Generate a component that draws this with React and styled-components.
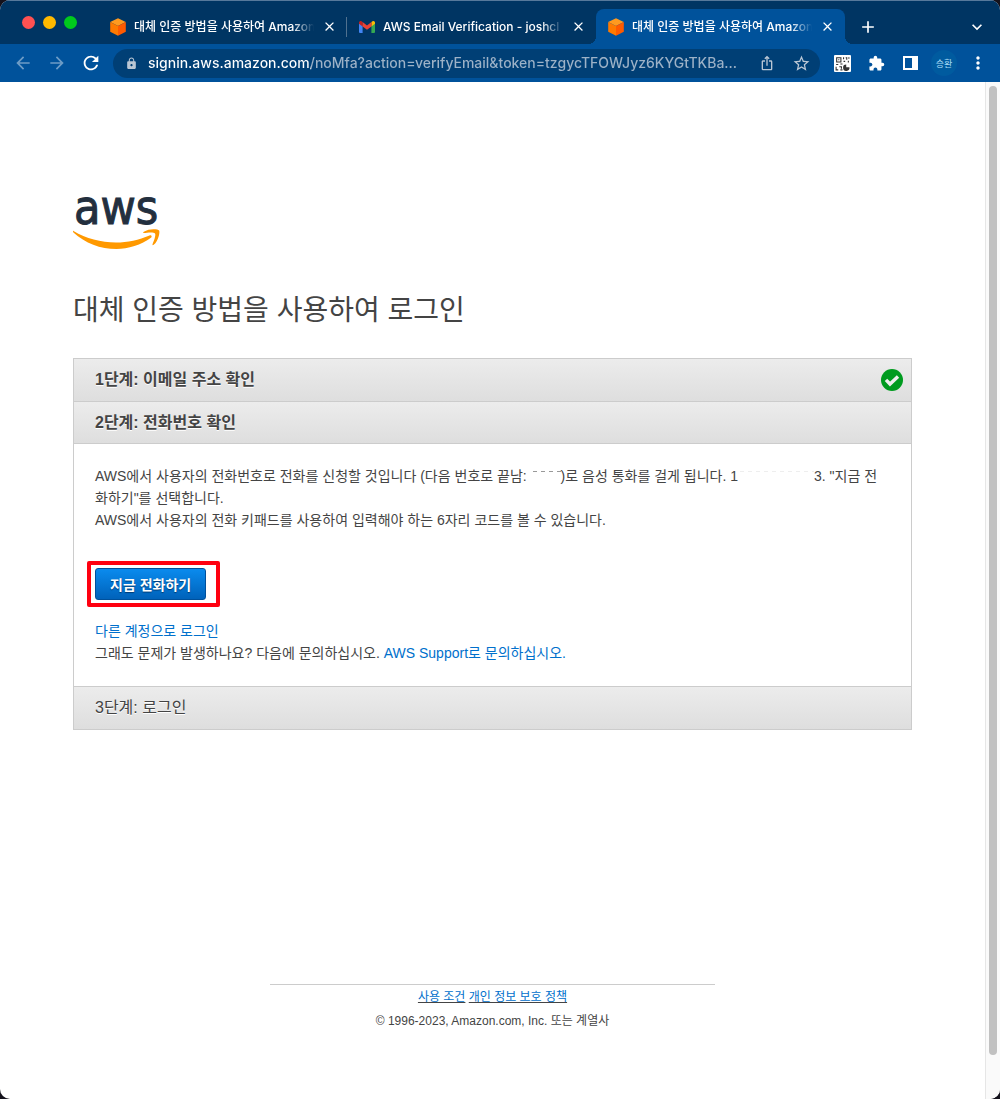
import React, { useState } from 'react';
import styled, { createGlobalStyle } from 'styled-components';
import {
  MdArrowBack,
  MdArrowForward,
  MdRefresh,
  MdLock,
  MdIosShare,
  MdStarOutline,
  MdExtension,
  MdMoreVert,
  MdClose,
  MdAdd,
  MdKeyboardArrowDown,
} from 'react-icons/md';

const GlobalStyle = createGlobalStyle`
  * {
    box-sizing: border-box;
  }

  body {
    margin: 0;
    background-color: #14121c;
    color: #444;
    font-family: 'Liberation Sans', 'Noto Sans CJK KR', sans-serif;
    font-size: 14px;
    line-height: 22px;
  }

  button,
  input {
    font-family: inherit;
  }
`;

const Window = styled.div`
  display: flex;
  flex-direction: column;
  min-height: 100vh;
  border-radius: 10px;
  overflow: hidden;
  background-color: #fff;
`;

const Chrome = styled.header`
  font-family: Inter, 'Noto Sans CJK KR', sans-serif;
  color: #fff;
`;

const TabStrip = styled.div`
  display: flex;
  align-items: flex-end;
  height: 44px;
  background-color: #003563;
  border-top: 1px solid #57799b;
`;

const TrafficLights = styled.div`
  display: flex;
  align-self: center;
  gap: 8px;
  width: 98px;
  padding-left: 22px;
`;

const Light = styled.button`
  width: 13px;
  height: 13px;
  padding: 0;
  border: none;
  border-radius: 50%;
  background-color: ${(props) => props.$color};
`;

const Tab = styled.div`
  position: relative;
  display: flex;
  align-items: center;
  gap: 8px;
  flex: 0 1 249px;
  min-width: 0;
  height: 35px;
  padding: 0 10px 0 12px;
  border-radius: 8px 8px 0 0;
  background-color: ${(props) => (props.$active ? '#00529b' : 'transparent')};

  &::before,
  &::after {
    content: '';
    display: ${(props) => (props.$active ? 'block' : 'none')};
    position: absolute;
    bottom: 0;
    width: 8px;
    height: 8px;
  }

  &::before {
    right: 100%;
    background: radial-gradient(circle at 0 0, transparent 8px, #00529b 8px);
  }

  &::after {
    left: 100%;
    background: radial-gradient(circle at 100% 0, transparent 8px, #00529b 8px);
  }
`;

const TabTitle = styled.span`
  flex: 1;
  min-width: 0;
  overflow: hidden;
  white-space: nowrap;
  font-size: 12px;
  font-weight: 500;
  mask-image: linear-gradient(to right, #000 88%, transparent);
`;

const TabDivider = styled.div`
  align-self: center;
  width: 1px;
  height: 20px;
  margin: 8px 0 0 -1px;
  background-color: #50718f;
`;

const IconButton = styled.button`
  display: flex;
  align-items: center;
  justify-content: center;
  flex: none;
  width: ${(props) => props.$width || 34}px;
  height: ${(props) => props.$height || 34}px;
  padding: 0;
  border: none;
  background: none;
  color: ${(props) => props.$color || '#fff'};
`;

const TabMenu = styled.div`
  margin-left: auto;
  padding-right: 6px;
`;

const Toolbar = styled.div`
  display: flex;
  align-items: center;
  height: 38px;
  padding: 0 5px 0 6px;
  background-color: #00529b;
`;

const AddressBar = styled.div`
  display: flex;
  align-items: center;
  flex: 1;
  min-width: 0;
  height: 29px;
  margin: 0 5px;
  padding: 0 2px 0 12px;
  border-radius: 15px;
  background-color: #003f75;
  color: #b9c6d4;
`;

const AddressInput = styled.input`
  flex: 1;
  min-width: 0;
  margin-left: 10px;
  padding: 0;
  border: none;
  outline: none;
  font-size: 14px;
  font-weight: 500;
  line-height: 22px;
  text-overflow: ellipsis;
  color: transparent;
  background-image: linear-gradient(to right, #fff 163px, #9db2c7 163px);
  background-clip: text;
`;

const Profile = styled.button`
  width: 26px;
  height: 26px;
  margin: 0 4px;
  padding: 0;
  border: none;
  border-radius: 50%;
  background-color: #005b9f;
  color: #a8dcf5;
  font-size: 9px;
`;

const Viewport = styled.div`
  display: flex;
  flex: 1;
`;

const Page = styled.main`
  display: flex;
  flex-direction: column;
  flex: 1;
  min-width: 0;
  padding: 112px 73px 66px;
`;

const ScrollTrack = styled.div`
  width: 15px;
  padding: 4px 3px;
  border-left: 1px solid #e6e6e6;
  background-color: #fafafa;
`;

const ScrollThumb = styled.div`
  width: 8px;
  height: 96%;
  border-radius: 4px;
  background-color: #c1c1c1;
`;

const Title = styled.h1`
  margin: 40px 0 26px;
  font-size: 28px;
  font-weight: 400;
  line-height: 42px;
`;

const Steps = styled.section`
  border: 1px solid #ccc;
`;

const StepHeader = styled.h2`
  display: flex;
  align-items: center;
  justify-content: space-between;
  height: 42px;
  margin: 0;
  padding: 0 8px 0 21px;
  background-image: linear-gradient(#ececec, #dedede);
  font-size: 16px;
  font-weight: ${(props) => (props.$pending ? 400 : 700)};
  text-shadow: 0 1px 0 #fff;

  & + & {
    border-top: 1px solid #ccc;
  }
`;

const StepBody = styled.div`
  padding: 21px 26px 22px 21px;
  border-top: 1px solid #ccc;
  border-bottom: 1px solid #ccc;
`;

const Paragraph = styled.p`
  margin: 0;
`;

const Redacted = styled.span`
  display: inline-block;
  width: ${(props) => props.$width}px;
  height: 10px;
  background: repeating-linear-gradient(
      to right,
      transparent 0 2px,
      ${(props) => props.$color} 2px 6px,
      transparent 6px 8px
    )
    top / 100% 1px no-repeat;
`;

const CallArea = styled.div`
  position: relative;
  width: max-content;
  margin: 37px 0 20px;

  &::after {
    content: '';
    position: absolute;
    inset: -7px -14px -7px -8px;
    border: 4px solid #ff0010;
    border-radius: 2px;
    pointer-events: none;
  }
`;

const CallButton = styled.button`
  display: block;
  height: 32px;
  padding: 0 14px;
  border: 1px solid #00509b;
  border-radius: 3px;
  background-image: linear-gradient(#0a8bee, #0062ba);
  color: #fff;
  font-size: 14px;
  font-weight: 700;
  text-shadow: 0 1px 1px #003b73;
`;

const Link = styled.a`
  color: #0070cc;
  text-decoration: none;
`;

const Footer = styled.footer`
  width: 53%;
  margin: auto auto 0;
  border-top: 1px solid #ccc;
  font-size: 12px;
  line-height: 24px;
  text-align: center;
`;

const FooterLink = styled(Link)`
  text-decoration: underline;
  text-decoration-color: #444;
`;

const CubeIcon = () => (
  <svg width="16" height="18" viewBox="0 0 16 18" aria-hidden="true">
    <path d="M8 .3 15.800 4 8 8 .2 4z" fill="#ff9a1f" />
    <path d="M.2 4 8 8v9.700L.2 13.800z" fill="#ff7a00" />
    <path d="M15.800 4 8 8v9.700l7.800-3.900z" fill="#ff5a00" />
  </svg>
);

const GmailIcon = () => (
  <svg width="16" height="12" viewBox="0 0 16 12" aria-hidden="true">
    <path d="M0 2v9a1 1 0 0 0 1 1h2.600V4.600z" fill="#4285f4" />
    <path d="M16 2v9a1 1 0 0 1-1 1h-2.600V4.600z" fill="#34a853" />
    <path d="M12.400 1.100v4.300L16 2.700V1.600C16 .2 14.400-.5 13.300.4z" fill="#fbbc04" />
    <path d="M3.600 1.100v4.300L0 2.700V1.600C0 .2 1.600-.5 2.700.4z" fill="#c5221f" />
    <path d="M3.600 1.100 8 4.400l4.400-3.300v4.300L8 8.700 3.600 5.400z" fill="#ea4335" />
  </svg>
);

const QrIcon = () => (
  <svg width="17" height="17" viewBox="0 0 16 16" aria-hidden="true">
    <rect width="16" height="16" rx="1" fill="#fff" />
    <path
      d="M2.500 2.500h4v4h-4zM9 2v2M9 6h1.500M11 2.500h1v2M14 2v1.500M13.500 5.500v1.500M2 9h2M6 8.500h2M2 11v3h2M5 11h2v2M6 14h2"
      fill="none"
      stroke="#333"
    />
    <path d="M4 4h1v1H4zM11.500 9v2.500H14.500A3 3 0 1 1 11.500 9z" fill="#333" />
  </svg>
);

const SidePanelIcon = () => (
  <svg width="15" height="14" viewBox="0 0 15 14" aria-hidden="true">
    <path d="M0 0h15v14H0zM2 2v10h7V2z" fill="#fff" fillRule="evenodd" />
  </svg>
);

const CheckIcon = () => (
  <svg width="22" height="22" viewBox="0 0 22 22" role="img" aria-label="완료">
    <circle cx="11" cy="11" r="11" fill="#009b1f" />
    <path d="m5 10.800 4 4.200 8-7.500" fill="none" stroke="#eee" strokeWidth="3.400" />
  </svg>
);

const AwsLogo = () => (
  <svg width="88" height="56" viewBox="0 0 88 56" role="img" aria-label="aws">
    <text
      x="1"
      y="30"
      fill="#232f3e"
      stroke="#232f3e"
      strokeWidth="1"
      fontFamily="'DejaVu Sans Condensed', 'DejaVu Sans', sans-serif"
      fontSize="48"
    >
      aws
    </text>
    <path
      d="M.5 37C13 44.500 28 48.500 43 48.500c11.500 0 23-2.600 33.500-7.100 1.700-.7 3 1.100 1.400 2.400C68.500 51 55 55 43.500 55 27.500 55 12 49 .4 38.400-.5 37.500-.2 36.500.5 37z"
      fill="#ff9900"
    />
    <path
      d="M82 39.500c-1.300-1.600-8-.8-11-.4-1 .1-1.100-.7-.2-1.300 5.400-3.800 14.300-2.700 15.300-1.400 1 1.300-.3 10.200-5.400 14.400-.8.7-1.500.3-1.200-.5 1.200-2.900 3.700-9.200 2.500-10.800z"
      fill="#ff9900"
    />
  </svg>
);

const tabs = [
  { id: 1, icon: <CubeIcon />, title: '대체 인증 방법을 사용하여 Amazon' },
  { id: 2, icon: <GmailIcon />, title: 'AWS Email Verification - joshcl' },
  {
    id: 3,
    icon: <CubeIcon />,
    title: '대체 인증 방법을 사용하여 Amazon',
    active: true,
  },
];

function BrowserChrome() {
  const [url, setUrl] = useState(
    'signin.aws.amazon.com/noMfa?action=verifyEmail&token=tzgycTFOWJyz6KYGtTKBa...'
  );

  return (
    <Chrome>
      <TabStrip>
        <TrafficLights>
          <Light $color="#ff5152" aria-label="닫기" />
          <Light $color="#ffb900" aria-label="최소화" />
          <Light $color="#00ca1d" aria-label="확대" />
        </TrafficLights>
        {tabs.map((tab) => (
          <React.Fragment key={tab.id}>
            <Tab $active={tab.active}>
              {tab.icon}
              <TabTitle>{tab.title}</TabTitle>
              <IconButton $width={15} $height={15} aria-label="탭 닫기">
                <MdClose size={15} />
              </IconButton>
            </Tab>
            {tab.id === 1 && <TabDivider />}
          </React.Fragment>
        ))}
        <IconButton $width={46} aria-label="새 탭">
          <MdAdd size={20} />
        </IconButton>
        <TabMenu>
          <IconButton aria-label="탭 검색">
            <MdKeyboardArrowDown size={20} />
          </IconButton>
        </TabMenu>
      </TabStrip>
      <Toolbar>
        <IconButton $color="#6d9cc6" aria-label="뒤로">
          <MdArrowBack size={20} />
        </IconButton>
        <IconButton $color="#6d9cc6" aria-label="앞으로">
          <MdArrowForward size={20} />
        </IconButton>
        <IconButton aria-label="새로고침">
          <MdRefresh size={22} />
        </IconButton>
        <AddressBar>
          <MdLock size={13} />
          <AddressInput
            aria-label="주소"
            value={url}
            onChange={(event) => setUrl(event.target.value)}
          />
          <IconButton $color="#b9c6d4" aria-label="공유">
            <MdIosShare size={16} />
          </IconButton>
          <IconButton $color="#b9c6d4" aria-label="북마크">
            <MdStarOutline size={19} />
          </IconButton>
        </AddressBar>
        <IconButton aria-label="QR 코드">
          <QrIcon />
        </IconButton>
        <IconButton aria-label="확장 프로그램">
          <MdExtension size={17} />
        </IconButton>
        <IconButton aria-label="사이드 패널">
          <SidePanelIcon />
        </IconButton>
        <Profile>승환</Profile>
        <IconButton aria-label="메뉴">
          <MdMoreVert size={20} />
        </IconButton>
      </Toolbar>
    </Chrome>
  );
}

function App() {
  return (
    <>
      <GlobalStyle />
      <Window>
        <BrowserChrome />
        <Viewport>
          <Page>
            <AwsLogo />
            <Title>대체 인증 방법을 사용하여 로그인</Title>
            <Steps>
              <StepHeader>
                1단계: 이메일 주소 확인
                <CheckIcon />
              </StepHeader>
              <StepHeader>2단계: 전화번호 확인</StepHeader>
              <StepBody>
                <Paragraph>
                  AWS에서 사용자의 전화번호로 전화를 신청할 것입니다 (다음 번호로
                  끝남: <Redacted $width={30} $color="#999" />
                  )로 음성 통화를 걸게 됩니다. 1
                  <Redacted $width={76} $color="#eee" />
                  3. "지금 전화하기"를 선택합니다.
                </Paragraph>
                <Paragraph>
                  AWS에서 사용자의 전화 키패드를 사용하여 입력해야 하는 6자리
                  코드를 볼 수 있습니다.
                </Paragraph>
                <CallArea>
                  <CallButton>지금 전화하기</CallButton>
                </CallArea>
                <Paragraph>
                  <Link href="#login">다른 계정으로 로그인</Link>
                </Paragraph>
                <Paragraph>
                  그래도 문제가 발생하나요? 다음에 문의하십시오.{' '}
                  <Link href="#support">AWS Support로 문의하십시오.</Link>
                </Paragraph>
              </StepBody>
              <StepHeader $pending>3단계: 로그인</StepHeader>
            </Steps>
            <Footer>
              <div>
                <FooterLink href="#terms">사용 조건</FooterLink>{' '}
                <FooterLink href="#privacy">개인 정보 보호 정책</FooterLink>
              </div>
              <div>© 1996-2023, Amazon.com, Inc. 또는 계열사</div>
            </Footer>
          </Page>
          <ScrollTrack>
            <ScrollThumb />
          </ScrollTrack>
        </Viewport>
      </Window>
    </>
  );
}

export default App;
